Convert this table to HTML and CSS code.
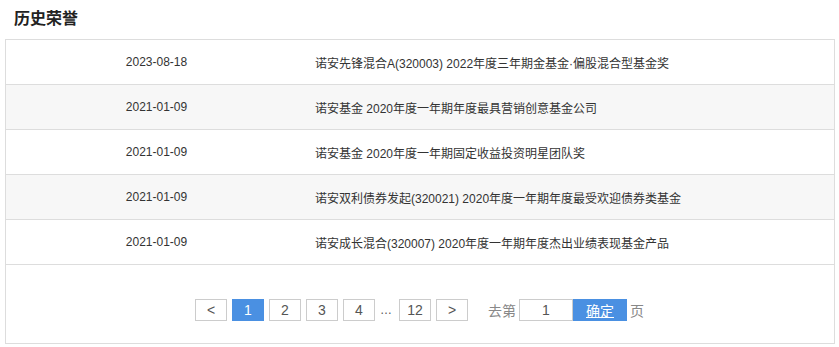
FILE: index.html
```html
<!DOCTYPE html>
<html lang="zh">
<head>
<meta charset="utf-8">
<link rel="stylesheet" href="styles.css">
</head>
<body>
<div class="page">
  <h2 class="title">历史荣誉</h2>
  <div class="box">
    <div class="row"><div class="date">2023-08-18</div><div class="award">诺安先锋混合A(320003) 2022年度三年期金基金·偏股混合型基金奖</div></div>
    <div class="row alt"><div class="date">2021-01-09</div><div class="award">诺安基金 2020年度一年期年度最具营销创意基金公司</div></div>
    <div class="row"><div class="date">2021-01-09</div><div class="award">诺安基金 2020年度一年期固定收益投资明星团队奖</div></div>
    <div class="row alt"><div class="date">2021-01-09</div><div class="award">诺安双利债券发起(320021) 2020年度一年期年度最受欢迎债券类基金</div></div>
    <div class="row"><div class="date">2021-01-09</div><div class="award">诺安成长混合(320007) 2020年度一年期年度杰出业绩表现基金产品</div></div>
    <div class="pager">
      <span class="pbtn">&lt;</span>
      <span class="pbtn active">1</span>
      <span class="pbtn">2</span>
      <span class="pbtn">3</span>
      <span class="pbtn">4</span>
      <span class="dots">…</span>
      <span class="pbtn">12</span>
      <span class="pbtn">&gt;</span>
      <span class="goto">去第</span>
      <span class="pinput">1</span>
      <span class="confirm">确定</span>
      <span class="unit">页</span>
    </div>
  </div>
</div>
</body>
</html>
```

FILE: styles.css
```css
html, body { margin: 0; padding: 0; background: #fff; }
body { font-family: "Liberation Sans", Arial, "Noto Sans CJK SC", sans-serif; font-size: 12px; color: #333; }
.page { padding: 0 5px; width: 830px; }
.title { margin: 0; height: 39px; line-height: 37px; padding-left: 9px; font-size: 16px; font-weight: bold; color: #222; }
.box { border: 1px solid #ddd; }
.row { display: flex; height: 44px; align-items: center; border-bottom: 1px solid #ddd; background: #fff; }
.row.alt { background: #f7f7f7; }
.date { width: 301px; text-align: center; flex-shrink: 0; }
.award { padding-left: 8px; }
.pager { display: flex; align-items: center; justify-content: flex-start; padding: 34px 0 22px 189px; height: 22px; }
.pbtn { box-sizing: border-box; width: 32px; height: 22px; border: 1px solid #ccc; display: flex; align-items: center; justify-content: center; font-size: 14px; color: #555; margin-right: 5px; }
.pbtn.active { background: #4a90e2; border-color: #4a90e2; color: #fff; }
.dots { width: 19px; text-align: left; color: #555; font-size: 12px; }
.goto { margin-left: 15px; font-size: 14px; color: #888; width: 31px; }
.pinput { box-sizing: border-box; width: 54px; height: 22px; border: 1px solid #ccc; display: flex; align-items: center; justify-content: center; font-size: 14px; color: #555; }
.confirm { width: 54px; height: 22px; background: #4a90e2; color: #fff; display: flex; align-items: center; justify-content: center; font-size: 14px; text-decoration: underline; }
.unit { margin-left: 3px; font-size: 14px; color: #888; }
```
